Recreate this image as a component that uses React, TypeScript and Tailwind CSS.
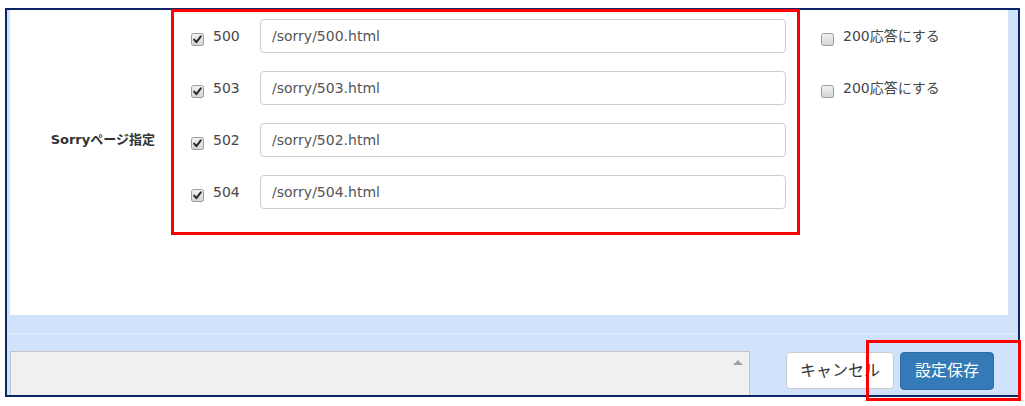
import React from "react";

const FONT = "font-['DejaVu_Sans','Noto_Sans_CJK_JP',sans-serif]";

function Check({ checked }: { checked: boolean }) {
  return (
    <svg width="13" height="13" viewBox="0 0 13 13" className="shrink-0">
      <defs>
        <linearGradient id="cbg" x1="0" y1="0" x2="0" y2="1">
          <stop offset="0" stopColor="#f2f2f2" />
          <stop offset="1" stopColor="#d4d4d4" />
        </linearGradient>
      </defs>
      <rect x="0.5" y="0.5" width="12" height="12" rx="2" fill="url(#cbg)" stroke="#9c9c9c" />
      {checked && (
        <path d="M3.2 6.6 L5.4 9.2 L9.8 3.4" fill="none" stroke="#2a2a2a" strokeWidth="2" strokeLinecap="round" strokeLinejoin="round" />
      )}
    </svg>
  );
}

const rows = [
  { code: "500", path: "/sorry/500.html", ok: true },
  { code: "503", path: "/sorry/503.html", ok: true },
  { code: "502", path: "/sorry/502.html", ok: false },
  { code: "504", path: "/sorry/504.html", ok: false },
];

export default function App() {
  return (
    <div className={`relative h-[406px] w-[1025px] overflow-hidden bg-white ${FONT}`}>
      <div className="ml-[5px] mt-[8px] flex h-[389px] w-[1015px] flex-col border-2 border-[#0b2463] bg-[#d1e2fc]">
        {/* form panel */}
        <div className="ml-[3px] mr-[10px] flex h-[305px] bg-white pt-[9px]">
          <div className="w-[145px] pt-[112px] text-right text-[13px] font-bold leading-[18px] text-[#333]">
            Sorryページ指定
          </div>
          <div className="ml-[36px] flex flex-col gap-[18px]">
            {rows.map((r) => (
              <div key={r.code} className="flex h-[34px] items-start">
                <div className="flex w-[69px] items-start pt-[7px] text-[14px] font-normal leading-[20px] text-[#474747]">
                  <span className="mt-[7px]">
                    <Check checked />
                  </span>
                  <span className="ml-[9px]">{r.code}</span>
                </div>
                <div className="flex h-[34px] w-[526px] items-center rounded-[4px] border border-[#cccccc] pl-[11px] text-[14px] text-[#555]">
                  {r.path}
                </div>
                {r.ok && (
                  <div className="ml-[35px] flex items-start pt-[7px] text-[14px] font-normal leading-[20px] text-[#474747]">
                    <span className="mt-[7px]">
                      <Check checked={false} />
                    </span>
                    <span className="ml-[9px]">200応答にする</span>
                  </div>
                )}
              </div>
            ))}
          </div>
        </div>

        {/* footer */}
        <div className="h-[18px]" />
        <div className="h-[18px] border-t border-[#e2ecfb]" />
        <div className="flex h-[44px] items-start">
          <div className="relative ml-[3px] h-[44px] w-[740px] border border-b-0 border-[#c5c5c5] bg-[#f0f0f0]">
            <span className="absolute right-[6px] top-[8px] h-0 w-0 border-x-[5px] border-b-[5px] border-x-transparent border-b-[#a3a3a3]" />
          </div>
          <div className="ml-auto mr-[24px] mt-[1px] flex gap-[6px]">
            <button className="h-[37px] w-[108px] rounded-[4px] border border-[#cccccc] bg-white text-[16px] text-[#333]">
              キャンセル
            </button>
            <button className="h-[38px] w-[94px] rounded-[4px] border border-[#2e6da4] bg-[#337ab7] text-[16px] text-white">
              設定保存
            </button>
          </div>
        </div>
      </div>

      {/* red annotation boxes */}
      <div className="pointer-events-none absolute left-[171px] top-[9px] h-[226px] w-[629px] border-[3px] border-[#ff0000]" />
      <div className="pointer-events-none absolute left-[866px] top-[340px] h-[61px] w-[155px] border-[3px] border-[#ff0000]" />
    </div>
  );
}
